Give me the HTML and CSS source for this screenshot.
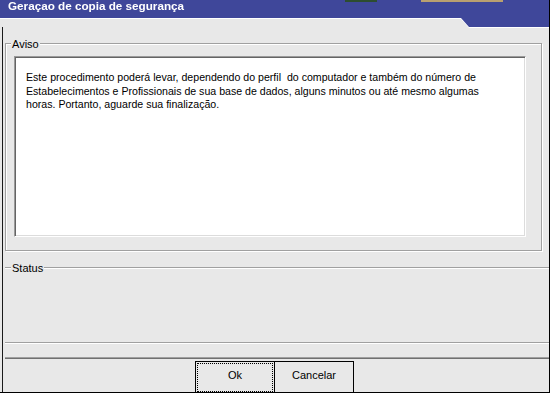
FILE: index.html
```html
<!DOCTYPE html>
<html lang="pt">
<head>
<meta charset="utf-8">
<title>Geraçao de copia de segurança</title>
<link rel="stylesheet" href="styles.css">
</head>
<body>
<div class="window">
  <div class="header-wrap">
    <div class="header"><span class="title">Geraçao de copia de segurança</span></div>
  </div>
  <span class="deco deco-green"></span>
  <span class="deco deco-tan"></span>
  <div class="content">
    <div class="group aviso">
      <span class="group-label">Aviso</span>
      <div class="memo">
        <p>Este procedimento poderá levar, dependendo do perfil&nbsp; do computador e também do número de<br>Estabelecimentos e Profissionais de sua base de dados, alguns minutos ou até mesmo algumas<br>horas. Portanto, aguarde sua finalização.</p>
      </div>
    </div>
    <div class="group status">
      <span class="group-label">Status</span>
    </div>
    <div class="button-bar">
      <button class="btn btn-ok" type="button">Ok</button>
      <button class="btn" type="button">Cancelar</button>
    </div>
  </div>
</div>
</body>
</html>
```
FILE: styles.css
```css
html, body {
  margin: 0;
  padding: 0;
  background: #ffffff;
}

.window {
  position: relative;
  width: 550px;
  height: 393px;
  box-sizing: border-box;
  border-right: 1px solid #000;
  border-bottom: 1px solid #000;
  background: #e8e8e8;
  overflow: hidden;
  display: flex;
  flex-direction: column;
  font-family: "Liberation Sans", Arial, sans-serif;
  color: #000;
}

.header-wrap {
  flex: none;
  height: 27px;
  filter: drop-shadow(0 1px 0 #ffffff);
}

.header {
  height: 27px;
  background: #3f479a;
  clip-path: polygon(0 0, 100% 0, 100% 27px, 469px 27px, 461px 18px, 0 18px);
}

.title {
  display: block;
  padding-left: 8px;
  font-weight: bold;
  font-size: 11.7px;
  line-height: 12px;
  color: #ffffff;
  white-space: nowrap;
}

.deco {
  position: absolute;
  top: 0;
  height: 2px;
}

.deco-green {
  left: 345px;
  width: 32px;
  background: #2d4d30;
}

.deco-tan {
  left: 421px;
  width: 82px;
  background: #b9a070;
}

.content {
  flex: 1;
  min-height: 0;
  margin-left: 2px;
  border-left: 1px solid #1a1a1a;
  display: flex;
  flex-direction: column;
}

.group {
  position: relative;
  flex: none;
  box-sizing: border-box;
  border: 1px solid #a0a0a0;
}

.group-label {
  position: absolute;
  top: -5px;
  left: 5px;
  padding: 0 1px;
  background: #e8e8e8;
  font-size: 11px;
  line-height: 11px;
  white-space: nowrap;
}

.aviso {
  margin: 16px 0 0 2px;
  width: 537px;
  height: 208px;
  padding: 12px 0 0 8px;
  box-shadow: inset 1px 1px 0 #ffffff, 1px 1px 0 #ffffff;
}

.memo {
  width: 512px;
  height: 181px;
  box-sizing: border-box;
  background: #ffffff;
  border: 1px solid;
  border-color: #9a9a9a #ffffff #ffffff #9a9a9a;
  box-shadow: inset 1px 1px 0 #646464, inset -1px -1px 0 #dcdcdc;
  padding: 14px 0 0 11px;
}

.memo p {
  margin: 0;
  font-size: 10.6px;
  line-height: 13.5px;
  white-space: nowrap;
}

.status {
  margin: 16px 0 0 2px;
  width: 546px;
  height: 76px;
  border-left: none;
  border-right: none;
  box-shadow: inset 0 1px 0 #ffffff, 0 1px 0 #ffffff;
}

.status .group-label {
  left: 6px;
}

.button-bar {
  flex: none;
  display: flex;
  margin: 14px 0 0 2px;
  width: 544px;
  border-top: 1px solid #a0a0a0;
  box-shadow: inset 0 1px 0 #707070;
  padding: 3px 0 0 190px;
}

.btn {
  appearance: none;
  -webkit-appearance: none;
  position: relative;
  margin: 0;
  width: 80px;
  height: 33px;
  box-sizing: border-box;
  border: 1px solid #000;
  border-radius: 0;
  background: #e8e8e8;
  padding: 0 0 5px;
  font-family: "Liberation Sans", Arial, sans-serif;
  font-size: 11px;
  line-height: 11px;
  color: #000;
  text-align: center;
  display: block;
}

.btn + .btn {
  margin-left: -1px;
}

.btn-ok::after {
  content: "";
  position: absolute;
  top: 1px;
  left: 1px;
  right: 1px;
  bottom: 1px;
  border: 1px dotted #000;
}
```
